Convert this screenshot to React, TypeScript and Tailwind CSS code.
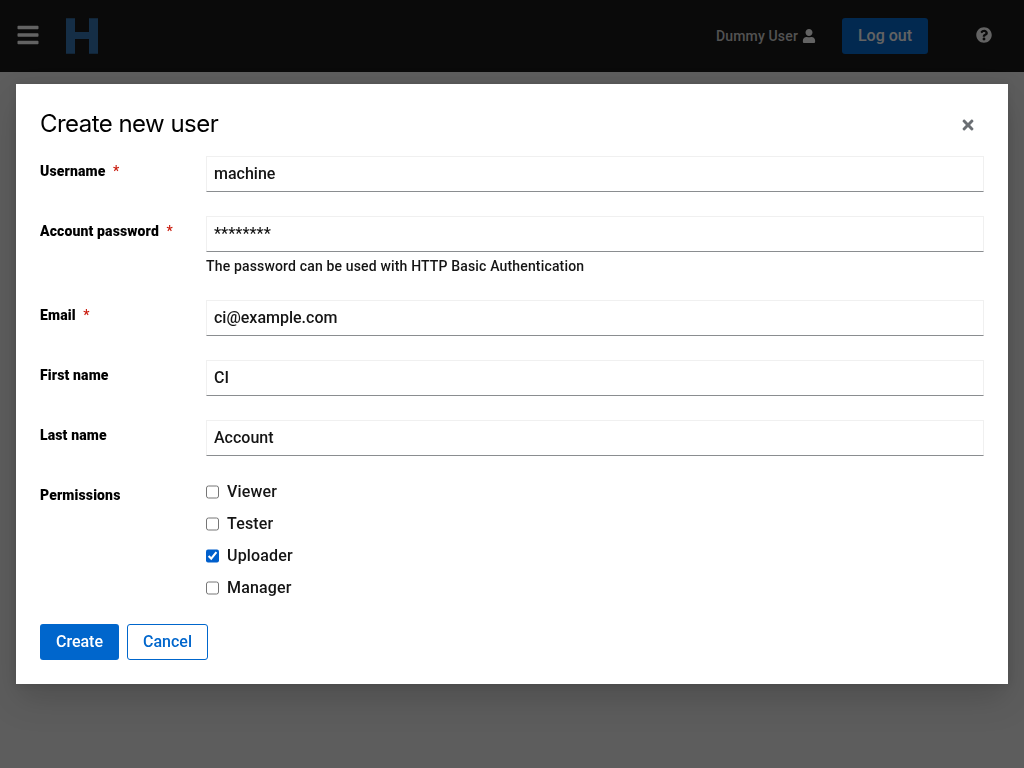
import type { ReactNode } from "react";
import { FaBars, FaQuestionCircle, FaTimes, FaUser } from "react-icons/fa";

function Field({ label, required, children }: { label: string; required?: boolean; children: ReactNode }) {
  return (
    <div className="grid grid-cols-[150px_1fr] gap-x-4">
      <div className="pt-[5px] text-[14px] leading-[21px]">
        <span className="font-black tracking-[0.13px] text-black">{label}</span>
        {required && <span className="ml-[7.5px] text-[#c9190b]">*</span>}
      </div>
      <div>{children}</div>
    </div>
  );
}

function TextInput({ value, type = "text" }: { value: string; type?: string }) {
  return (
    <input
      type={type}
      defaultValue={value}
      className="block h-9 w-full border border-[#f0f0f0] border-b-[#8a8d90] bg-white px-[7px] pb-[6px] pt-1 text-[16px] leading-6 tracking-normal text-[#151515] outline-none"
    />
  );
}

const permissions = [
  { name: "Viewer", checked: false },
  { name: "Tester", checked: false },
  { name: "Uploader", checked: true },
  { name: "Manager", checked: false },
];

export default function App() {
  return (
    <div className="h-screen overflow-hidden bg-[#f0f0f0] font-['Roboto',sans-serif] text-[16px] font-medium leading-6 tracking-[0.16px] text-[#151515]">
      <header className="flex h-[72px] items-center bg-[#151515] text-white">
        <button className="mb-0.5 ml-4 flex h-9 w-6 items-center justify-center text-[24px]">
          <FaBars />
        </button>
        <svg className="ml-[26px]" width="32" height="36" viewBox="0 0 32 36" fill="#3474b2">
          <path d="M0 .3h9V14h14V.3h9v35.4h-9V21H9v14.7H0z" />
        </svg>
        <div className="ml-auto flex items-center">
          <span className="text-[14px] leading-[21px] text-[#d2d2d2]">Dummy User</span>
          <FaUser className="ml-1 text-[14px]" />
          <button className="ml-[26px] h-9 w-[86px] rounded-[3px] bg-[#06c] tracking-normal">Log out</button>
          <FaQuestionCircle className="mb-0.5 ml-12 mr-8 text-[16px]" />
        </div>
      </header>

      <div className="fixed inset-0 flex items-start bg-[rgba(3,3,3,0.62)] px-4 pt-[84px]">
        <div
          role="dialog"
          className="h-[600px] w-full bg-white px-6 pt-6 shadow-[0_16px_32px_0_rgba(3,3,3,0.16),0_0_8px_0_rgba(3,3,3,0.1)]"
        >
          <div className="flex h-12 items-start justify-between">
            <h1 className="font-['Inter',sans-serif] text-[24px] font-normal leading-[31px] tracking-[-0.54px] text-black">
              Create new user
            </h1>
            <button aria-label="Close" className="mr-2 mt-[9px] text-[16px] text-[#6a6e73]">
              <FaTimes />
            </button>
          </div>
          <form className="flex flex-col gap-6">
            <Field label="Username" required>
              <TextInput value="machine" />
            </Field>
            <Field label="Account password" required>
              <TextInput value="********" />
              <div className="h-6 pt-1 text-[14px] leading-[21px]">The password can be used with HTTP Basic Authentication</div>
            </Field>
            <Field label="Email" required>
              <TextInput value="ci@example.com" />
            </Field>
            <Field label="First name">
              <TextInput value="CI" />
            </Field>
            <Field label="Last name">
              <TextInput value="Account" />
            </Field>
            <Field label="Permissions">
              <div className="flex flex-col gap-2">
                {permissions.map((p) => (
                  <label key={p.name} className="flex h-6 items-start gap-2">
                    <input type="checkbox" defaultChecked={p.checked} className="m-0 mt-[5px] h-[14px] w-[13px] accent-[#005fcc]" />
                    <span>{p.name}</span>
                  </label>
                ))}
              </div>
            </Field>
            <div className="flex gap-2">
              <button type="button" className="h-9 w-[79px] rounded-[3px] bg-[#06c] tracking-normal text-white">
                Create
              </button>
              <button type="button" className="h-9 w-[81px] rounded-[3px] border border-[#06c] tracking-normal text-[#06c]">
                Cancel
              </button>
            </div>
          </form>
        </div>
      </div>
    </div>
  );
}
